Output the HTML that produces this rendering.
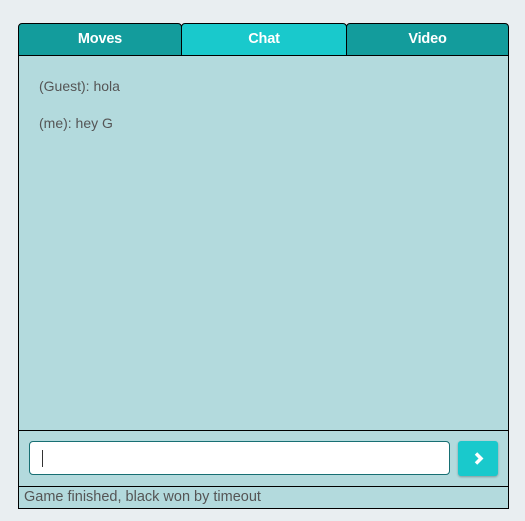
<!DOCTYPE html><html><head><style>
body{margin:0;width:525px;height:521px;background:#e9eef1;font-family:"Liberation Sans",sans-serif;position:relative;overflow:hidden}
.a{position:absolute;box-sizing:border-box}
.tab{top:23px;height:33px;border:1px solid #000;border-radius:4px 4px 0 0;color:#fff;font-size:14.5px;text-align:center;line-height:31px;background:#139c9c;font-weight:bold;letter-spacing:-0.2px}
</style></head><body>
<div class="a" style="left:18px;top:55px;width:491px;height:454px;border:1px solid #000;background:#b3dadd"></div>
<div class="a tab" style="left:18px;width:164px">Moves</div>
<div class="a tab" style="left:181px;width:166px;background:#19c9cc">Chat</div>
<div class="a tab" style="left:346px;width:163px">Video</div>
<div class="a" style="left:39px;top:78px;font-size:14px;color:#555">(Guest): hola</div>
<div class="a" style="left:39px;top:115px;font-size:14px;color:#555">(me): hey G</div>
<div class="a" style="left:18px;top:430px;width:491px;height:1px;background:#000"></div>
<div class="a" style="left:29px;top:441px;width:421px;height:34px;background:#fff;border:1px solid #176f73;border-radius:4px"></div>
<div class="a" style="left:42px;top:450px;width:1px;height:17px;background:#333"></div>
<div class="a" style="left:458px;top:441px;width:40px;height:35px;background:#19c9cc;border-radius:3px;box-shadow:0 1px 2px rgba(0,0,0,.3)"><svg width="40" height="35"><path d="M18 12.5l5 5-5 5" stroke="#fff" stroke-width="3.5" fill="none"/></svg></div>
<div class="a" style="left:18px;top:486px;width:491px;height:1px;background:#000"></div>
<div class="a" style="left:24px;top:489px;font-size:14.5px;color:#555">Game finished, black won by timeout</div>
</body></html>
